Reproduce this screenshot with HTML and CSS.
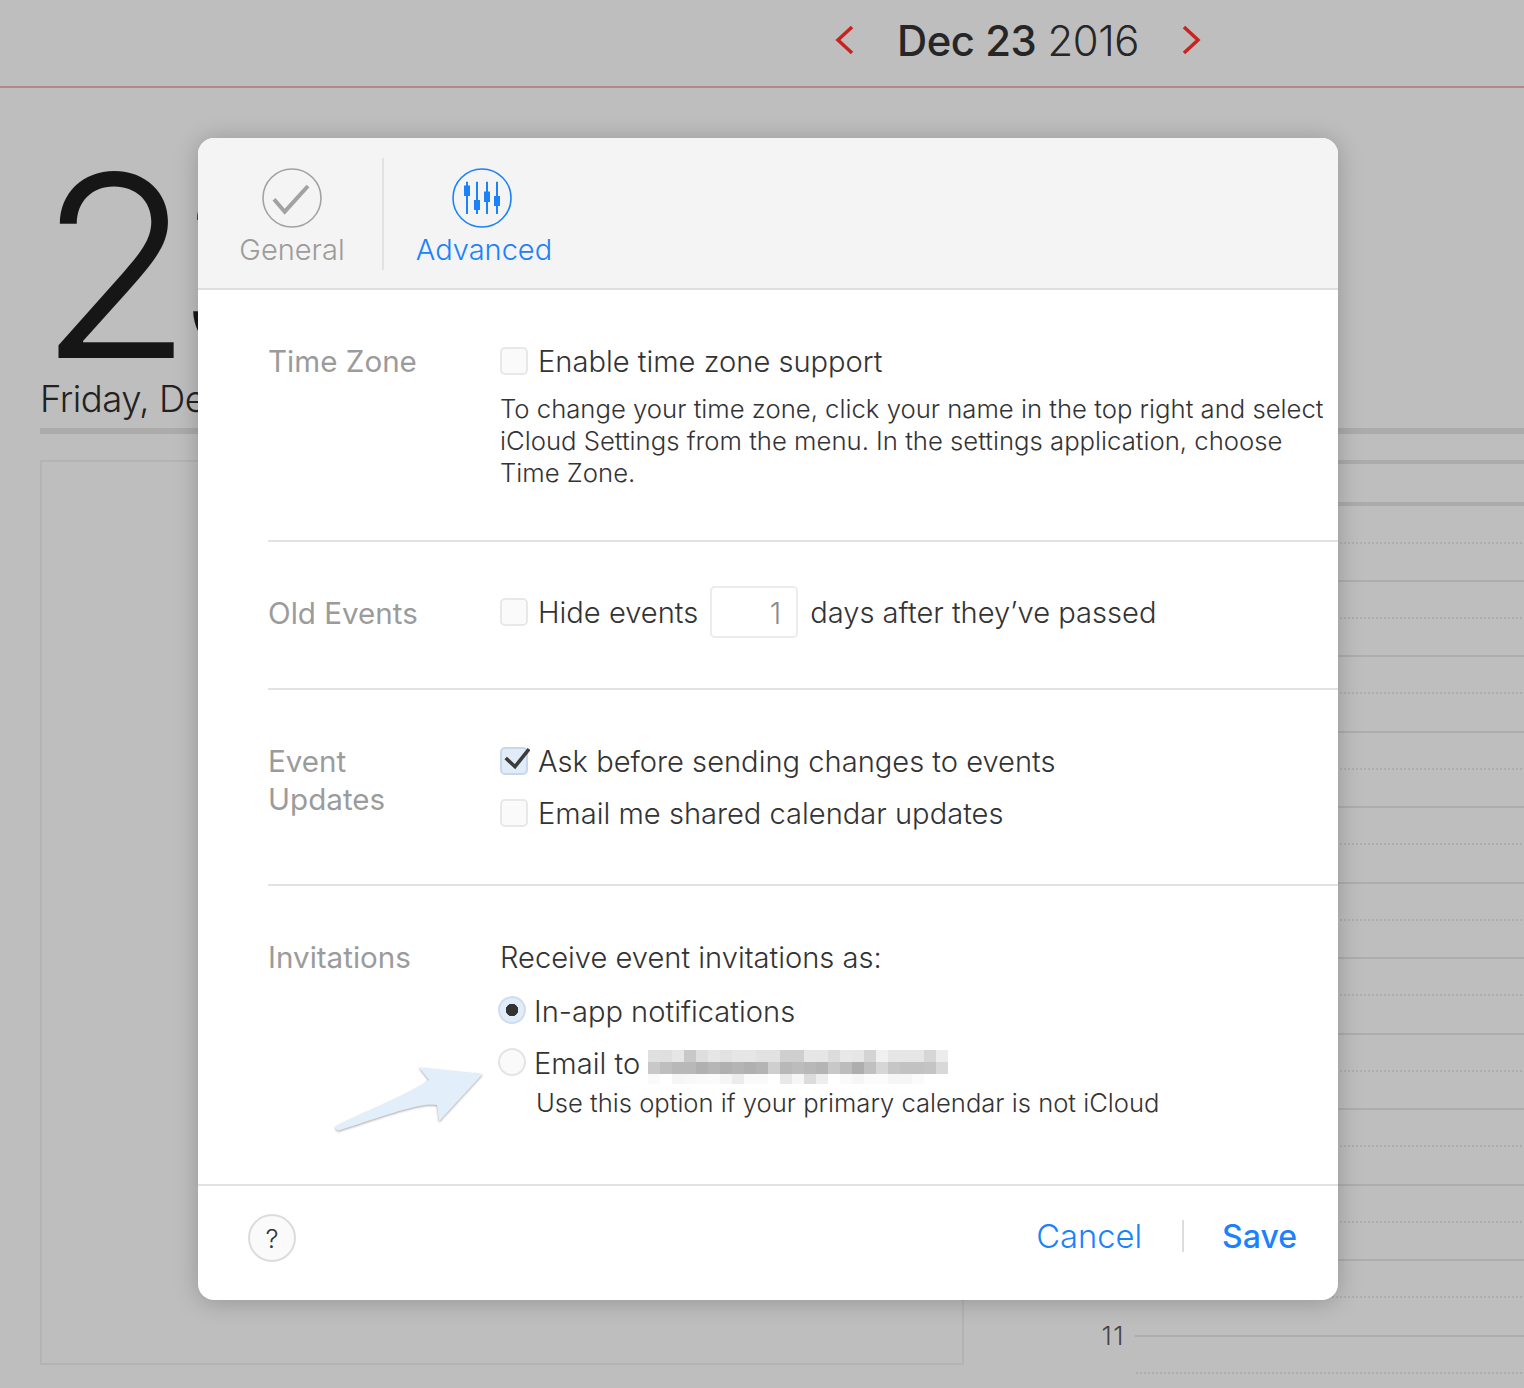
FILE: index.html
```html
<!DOCTYPE html>
<html lang="en">
<head>
<meta charset="UTF-8">
<meta name="viewport" content="width=device-width, initial-scale=1.0">
<title>Calendar Preferences</title>
<link rel="stylesheet" href="styles.css">
</head>
<body>

<div class="calendar">
    <div class="topbar">
        <svg class="chevron chevron-prev" width="20" height="30" viewBox="0 0 20 30"><path d="M17 2 L3 15 L17 28" fill="none" stroke="#c8231f" stroke-width="3.5"/></svg>
        <div class="topbar-date"><b>Dec 23</b> 2016</div>
        <svg class="chevron chevron-next" width="20" height="30" viewBox="0 0 20 30"><path d="M3 2 L17 15 L3 28" fill="none" stroke="#c8231f" stroke-width="3.5"/></svg>
    </div>

    <div class="day-head">
        <div class="day-number">23</div>
        <div class="day-name">Friday, December 23</div>
    </div>

    <div class="day-body">
        <div class="day-box"></div>
        <div class="hours">
            <div class="all-day"></div>
            <div class="hour first"><div class="hour-num"></div><div class="hour-line"></div></div>
            <div class="hour"><div class="hour-num"></div><div class="hour-line"></div></div>
            <div class="hour"><div class="hour-num"></div><div class="hour-line"></div></div>
            <div class="hour"><div class="hour-num"></div><div class="hour-line"></div></div>
            <div class="hour"><div class="hour-num"></div><div class="hour-line"></div></div>
            <div class="hour"><div class="hour-num"></div><div class="hour-line"></div></div>
            <div class="hour"><div class="hour-num"></div><div class="hour-line"></div></div>
            <div class="hour"><div class="hour-num"></div><div class="hour-line"></div></div>
            <div class="hour"><div class="hour-num"></div><div class="hour-line"></div></div>
            <div class="hour"><div class="hour-num"></div><div class="hour-line"></div></div>
            <div class="hour"><div class="hour-num"></div><div class="hour-line"></div></div>
            <div class="hour"><div class="hour-num"><span>11</span></div><div class="hour-line"></div></div>
        </div>
    </div>
</div>

<div class="dialog">
    <div class="tabs">
        <div class="tab">
            <svg width="60" height="60" viewBox="0 0 60 60">
                <circle cx="30" cy="30" r="29" fill="none" stroke="#a2a2a2" stroke-width="1.6"/>
                <path d="M12 31.3 L22.7 43.7 L46 18" fill="none" stroke="#a2a2a2" stroke-width="4"/>
            </svg>
            <div>General</div>
        </div>
        <div class="tab-divider"></div>
        <div class="tab tab-active">
            <svg width="60" height="60" viewBox="0 0 60 60">
                <circle cx="30" cy="30" r="29" fill="none" stroke="#1b82fb" stroke-width="1.6"/>
                <g stroke="#1b82fb" stroke-width="2">
                    <path d="M15 13.7V46M25 13.7V46M35 13.7V46M45 13.7V46"/>
                </g>
                <g fill="#1b82fb">
                    <rect x="12" y="17.5" width="6" height="10.5"/>
                    <rect x="22" y="32" width="6" height="10"/>
                    <rect x="32" y="23.5" width="6" height="10.5"/>
                    <rect x="42" y="28" width="6" height="10"/>
                </g>
            </svg>
            <div>Advanced</div>
        </div>
    </div>

    <div class="section section-zone">
        <div class="section-label">Time Zone</div>
        <div class="section-content">
            <div class="option"><span class="checkbox"></span>Enable time zone support</div>
            <p class="hint">To change your time zone, click your name in the top right and select iCloud Settings from the menu. In the settings application, choose Time Zone.</p>
        </div>
    </div>

    <div class="section section-old">
        <div class="section-label">Old Events</div>
        <div class="section-content">
            <div class="option">
                <span class="checkbox"></span>Hide events
                <span class="days-input">1</span>
                days after they’ve passed
            </div>
        </div>
    </div>

    <div class="section section-updates">
        <div class="section-label">Event<br>Updates</div>
        <div class="section-content">
            <div class="option">
                <span class="checkbox checked">
                    <svg width="30" height="26" viewBox="0 0 30 26"><path d="M5.7 13 L15 21.7 L29 4" fill="none" stroke="#3c3c3c" stroke-width="3.6"/></svg>
                </span>Ask before sending changes to events
            </div>
            <div class="option option-gap"><span class="checkbox"></span>Email me shared calendar updates</div>
        </div>
    </div>

    <div class="section section-invites">
        <div class="section-label">Invitations</div>
        <div class="section-content">
            <div class="option">Receive event invitations as:</div>
            <div class="option radio-first"><span class="radio selected"></span>In-app notifications</div>
            <div class="option option-gap">
                <span class="radio"></span>Email to
                <svg class="blur-mail" width="300" height="36" viewBox="0 0 300 36" shape-rendering="crispEdges">
                    <g>
                        <rect x="0" y="0" width="12" height="12" fill="#e0e0e0"/><rect x="12" y="0" width="12" height="12" fill="#dfdfdf"/><rect x="24" y="0" width="12" height="12" fill="#e6e6e6"/><rect x="36" y="0" width="12" height="12" fill="#c8c8c8"/><rect x="48" y="0" width="12" height="12" fill="#dedede"/><rect x="60" y="0" width="12" height="12" fill="#e6e6e6"/><rect x="72" y="0" width="12" height="12" fill="#e2e2e2"/><rect x="84" y="0" width="12" height="12" fill="#e6e6e6"/><rect x="96" y="0" width="12" height="12" fill="#e6e6e6"/><rect x="108" y="0" width="12" height="12" fill="#e2e2e2"/><rect x="120" y="0" width="12" height="12" fill="#e2e2e2"/><rect x="132" y="0" width="12" height="12" fill="#cfcfcf"/><rect x="144" y="0" width="12" height="12" fill="#cfcfcf"/><rect x="156" y="0" width="12" height="12" fill="#e6e6e6"/><rect x="168" y="0" width="12" height="12" fill="#e6e6e6"/><rect x="180" y="0" width="12" height="12" fill="#dcdcdc"/><rect x="192" y="0" width="12" height="12" fill="#e8e8e8"/><rect x="204" y="0" width="12" height="12" fill="#e6e6e6"/><rect x="216" y="0" width="12" height="12" fill="#d4d4d4"/><rect x="228" y="0" width="12" height="12" fill="#f0f0f0"/><rect x="240" y="0" width="12" height="12" fill="#e6e6e6"/><rect x="252" y="0" width="12" height="12" fill="#e6e6e6"/><rect x="264" y="0" width="12" height="12" fill="#e6e6e6"/><rect x="276" y="0" width="12" height="12" fill="#d6d6d6"/><rect x="288" y="0" width="12" height="12" fill="#ececec"/>
                    </g>
                    <g>
                        <rect x="0" y="12" width="12" height="12" fill="#c8c8c8"/><rect x="12" y="12" width="12" height="12" fill="#bebebe"/><rect x="24" y="12" width="12" height="12" fill="#b8b8b8"/><rect x="36" y="12" width="12" height="12" fill="#b8b8b8"/><rect x="48" y="12" width="12" height="12" fill="#b0b0b0"/><rect x="60" y="12" width="12" height="12" fill="#b6b6b6"/><rect x="72" y="12" width="12" height="12" fill="#b0b0b0"/><rect x="84" y="12" width="12" height="12" fill="#b4b4b4"/><rect x="96" y="12" width="12" height="12" fill="#b0b0b0"/><rect x="108" y="12" width="12" height="12" fill="#b4b4b4"/><rect x="120" y="12" width="12" height="12" fill="#cfcfcf"/><rect x="132" y="12" width="12" height="12" fill="#b8b8b8"/><rect x="144" y="12" width="12" height="12" fill="#bcbcbc"/><rect x="156" y="12" width="12" height="12" fill="#b8b8b8"/><rect x="168" y="12" width="12" height="12" fill="#b4b4b4"/><rect x="180" y="12" width="12" height="12" fill="#c8c8c8"/><rect x="192" y="12" width="12" height="12" fill="#bcbcbc"/><rect x="204" y="12" width="12" height="12" fill="#aeaeae"/><rect x="216" y="12" width="12" height="12" fill="#c0c0c0"/><rect x="228" y="12" width="12" height="12" fill="#d6d6d6"/><rect x="240" y="12" width="12" height="12" fill="#c6c6c6"/><rect x="252" y="12" width="12" height="12" fill="#c2c2c2"/><rect x="264" y="12" width="12" height="12" fill="#c2c2c2"/><rect x="276" y="12" width="12" height="12" fill="#c4c4c4"/><rect x="288" y="12" width="12" height="12" fill="#d8d8d8"/>
                    </g>
                    <g>
                        <rect x="0" y="24" width="12" height="10" fill="#fafafa"/><rect x="24" y="24" width="12" height="10" fill="#f6f6f6"/><rect x="36" y="24" width="12" height="10" fill="#f8f8f8"/><rect x="48" y="24" width="12" height="10" fill="#fafafa"/><rect x="60" y="24" width="12" height="10" fill="#fbfbfb"/><rect x="72" y="24" width="12" height="10" fill="#f6f6f6"/><rect x="84" y="24" width="12" height="10" fill="#ececec"/><rect x="96" y="24" width="12" height="10" fill="#fafafa"/><rect x="108" y="24" width="12" height="10" fill="#fafafa"/><rect x="132" y="24" width="12" height="10" fill="#e8e8e8"/><rect x="144" y="24" width="12" height="10" fill="#f6f6f6"/><rect x="156" y="24" width="12" height="10" fill="#dcdcdc"/><rect x="168" y="24" width="12" height="10" fill="#eeeeee"/><rect x="192" y="24" width="12" height="10" fill="#fafafa"/><rect x="204" y="24" width="12" height="10" fill="#f6f6f6"/><rect x="216" y="24" width="12" height="10" fill="#fcfcfc"/><rect x="228" y="24" width="12" height="10" fill="#fcfcfc"/><rect x="240" y="24" width="12" height="10" fill="#f6f6f6"/><rect x="252" y="24" width="12" height="10" fill="#f6f6f6"/><rect x="264" y="24" width="12" height="10" fill="#fbfbfb"/>
                    </g>
                </svg>
            </div>
            <p class="hint hint-note">Use this option if your primary calendar is not iCloud</p>
        </div>
        <svg class="arrow" width="160" height="76" viewBox="0 0 160 76">
            <path d="M157.7 13 L94 6.5 L104 19 C80 36 40 50 10.7 65.5 C10 68 12 69.5 14 69.5 C50 58 80 47 100 44 C105 43.5 108 44 112 44 L114 60.5 Z" fill="#e2eefa"/>
        </svg>
    </div>

    <div class="dialog-footer">
        <div class="help">?</div>
        <div class="footer-actions">
            <span class="action">Cancel</span>
            <span class="action-divider"></span>
            <span class="action action-save">Save</span>
        </div>
    </div>
</div>

</body>
</html>
```

FILE: styles.css
```css
html, body {
    margin: 0;
    height: 100%;
    overflow: hidden;
}
body {
    position: relative;
    background-color: #bebebe;
    font-family: Inter, "Liberation Sans", sans-serif;
    color: #333;
}
.calendar {
    height: 1388px;
    overflow: hidden;
}

/* calendar behind the dialog */
.topbar {
    height: 86px;
    border-bottom: 2px solid #b08a86;
    display: flex;
    align-items: center;
    padding-left: 835px;
}
.chevron {
    flex: none;
    margin-top: -6px;
}
.topbar-date {
    margin: -4px 0 0 42px;
    width: 284px;
    font-size: 41.8px;
    font-weight: 300;
    color: #262626;
    letter-spacing: -0.45px;
    white-space: nowrap;
}
.topbar-date b {
    font-weight: 500;
}
.day-head {
    margin-left: 40px;
    height: 340px;
    border-bottom: 6px solid #ababab;
    overflow: hidden;
}
.day-number {
    font-size: 253px;
    font-weight: 340;
    line-height: 200px;
    margin: 78px 0 0 -2px;
    color: #161616;
    letter-spacing: -17px;
}
.day-name {
    font-size: 36.5px;
    font-weight: 300;
    letter-spacing: -0.5px;
    line-height: 44px;
    margin-top: 11px;
    color: #222;
    white-space: nowrap;
}
.day-body {
    display: flex;
    margin-top: 26px;
}
.day-box {
    flex: none;
    width: 920px;
    height: 901px;
    margin-left: 40px;
    border: 2px solid #b4b4b4;
}
.hours {
    flex: 1;
}
.all-day {
    height: 38px;
    border-top: 4px solid #ababab;
    border-bottom: 4px solid #ababab;
}
.hour {
    display: flex;
    height: 75.5px;
}
.hour.first {
    height: 73.75px;
}
.hour-num {
    flex: none;
    width: 161px;
    padding-right: 10px;
    text-align: right;
    font-size: 26px;
    font-weight: 300;
    letter-spacing: 1.5px;
    color: #444;
    line-height: 30px;
    margin-top: -14px;
    height: 30px;
}
.hour-line {
    flex: 1;
    height: 75.5px;
    box-sizing: border-box;
    border-top: 2px solid #adadad;
    background-image: radial-gradient(circle, #adadad 1px, transparent 1px);
    background-size: 4px 4px;
    background-repeat: repeat-x;
    background-position: 0 34px;
}
.first .hour-line {
    height: 73.75px;
    border-top: none;
    background-position: 0 35px;
}

/* preferences dialog */
.dialog {
    position: absolute;
    left: 198px;
    top: 138px;
    width: 1140px;
    background-color: #fff;
    border-radius: 16px;
    box-shadow: 0 2px 24px rgba(0,0,0,0.22);
    overflow: hidden;
}
.tabs {
    display: flex;
    height: 130px;
    padding-top: 20px;
    border-bottom: 2px solid #dfdfdf;
    background-color: #f4f4f4;
}
.tab {
    display: flex;
    flex-direction: column;
    align-items: center;
    box-sizing: border-box;
    width: 184px;
    padding: 10px 0 0 4px;
    font-size: 29px;
    font-weight: 300;
    line-height: 44px;
    color: #9b9b9b;
}
.tab svg {
    flex: none;
}
.tab-active {
    width: 200px;
    padding-left: 0;
    color: #1b82fb;
}
.tab-active svg {
    margin-left: -4px;
}
.tab-divider {
    flex: none;
    width: 2px;
    height: 112px;
    background-color: #e2e2e2;
}
.section {
    display: flex;
    position: relative;
    margin-left: 70px;
    border-bottom: 2px solid #e2e2e2;
    font-size: 29.1px;
    font-weight: 300;
    line-height: 36px;
}
.section-label {
    flex: none;
    width: 232px;
    margin-top: -1px;
    font-size: 29.6px;
    font-weight: 400;
    color: #9b9b9b;
    line-height: 38px;
}
.section-content {
    flex: 1;
}
.section-zone {
    padding: 53px 0 51px;
}
.section-old {
    padding: 44px 0 50px;
}
.section-old .section-label {
    padding-top: 9px;
}
.section-updates {
    padding: 53px 0 53px;
}
.section-invites {
    padding: 53px 0 65px;
    border-bottom: none;
}
.option {
    display: flex;
    align-items: center;
    box-sizing: border-box;
    min-height: 36px;
    padding-top: 2px;
    line-height: 34px;
    white-space: nowrap;
}
.option-gap {
    margin-top: 16px;
}
.radio-first {
    margin-top: 18px;
}
.checkbox {
    position: relative;
    flex: none;
    width: 24px;
    height: 24px;
    margin: -2px 10px 0 0;
    border: 2px solid #e8e8e8;
    border-radius: 5px;
    background-color: #fafafa;
}
.checkbox.checked {
    background-color: #e1ecf9;
    border-color: #c8d8ea;
}
.checkbox svg {
    position: absolute;
    left: -2px;
    top: -4px;
}
.radio {
    flex: none;
    width: 24px;
    height: 24px;
    margin: -4px 8px 0 -2px;
    border: 2px solid #e4e4e4;
    border-radius: 50%;
    background-color: #fafafa;
}
.radio.selected {
    background-color: #e1ecf9;
    border-color: #cfdeef;
    background-image: radial-gradient(circle, #333 6px, transparent 6.5px);
}
.days-input {
    width: 69px;
    height: 48px;
    margin: -2px 12px 0;
    padding-right: 15px;
    border: 2px solid #ececec;
    border-radius: 5px;
    text-align: right;
    line-height: 52px;
    color: #888;
}
.hint {
    margin: 14px 0 0;
    font-size: 25.7px;
    line-height: 32px;
}
.hint-note {
    margin: 6px 0 0 36px;
    font-size: 25.6px;
}
.blur-mail {
    flex: none;
    align-self: flex-start;
    margin: 3px 0 -5px 8px;
}
.arrow {
    position: absolute;
    left: 57px;
    top: 175px;
    filter: drop-shadow(0 1px 1px rgba(0,0,0,0.35));
}
.dialog-footer {
    display: flex;
    align-items: center;
    justify-content: space-between;
    height: 114px;
    border-top: 2px solid #e2e2e2;
    padding: 0 41px 0 50px;
}
.help {
    width: 44px;
    height: 44px;
    margin-bottom: 11px;
    border: 2px solid #dcdcdc;
    border-radius: 50%;
    background-color: #fafafa;
    text-align: center;
    font-size: 26px;
    font-weight: 300;
    line-height: 46px;
}
.footer-actions {
    display: flex;
    align-items: center;
    margin-bottom: 14px;
    font-size: 32.7px;
    font-weight: 300;
    color: #1b82fb;
}
.action-divider {
    width: 2px;
    height: 32px;
    margin: 0 38px 0 40px;
    background-color: #ddd;
}
.action-save {
    font-size: 32px;
    font-weight: 500;
}
```
